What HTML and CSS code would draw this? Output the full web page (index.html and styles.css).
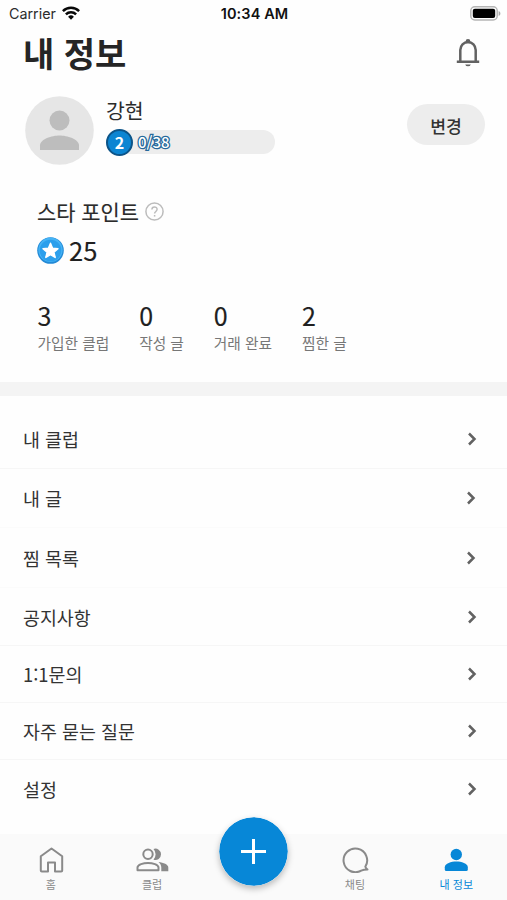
FILE: index.html
```html
<!DOCTYPE html>
<html lang="ko">
<head>
<meta charset="utf-8">
<meta name="viewport" content="width=device-width, initial-scale=1">
<title>내 정보</title>
<link rel="stylesheet" href="styles.css">
</head>
<body>
<div class="app">
  <header class="status">
    <div class="carrier"><span>Carrier</span>
      <svg class="wifi" width="18" height="14" viewBox="0 0 18 14"><g fill="none" stroke="#080808" stroke-width="2.5"><path d="M.9 5.1a11.6 11.6 0 0 1 16.2 0"/><path d="M3.9 8.4a7.2 7.2 0 0 1 10.2 0"/></g><path d="M9 13.7 6.1 10.7a4.2 4.2 0 0 1 5.8 0z" fill="#080808"/></svg>
    </div>
    <div class="time">10:34 AM</div>
    <svg class="battery" width="31" height="15" viewBox="0 0 31 15"><rect x=".8" y=".8" width="26.4" height="13.2" rx="4" fill="#fff" stroke="#b5b5b5" stroke-width="1.5"/><rect x="2.8" y="2.8" width="22.4" height="9.2" rx="2" fill="#000"/><path d="M28.6 5v5c1.2-.4 1.8-1.4 1.8-2.5S29.800 5.400 28.600 5z" fill="#aaa"/></svg>
  </header>

  <div class="titlebar">
    <h1>내 정보</h1>
    <svg width="24" height="30" viewBox="0 0 24 30"><path d="M4.300 23.500V12a7.700 8 0 0 1 15.400 0v11.500" fill="none" stroke="#626262" stroke-width="2.500"/><path d="M.8 22.500h22.400v2.500H.8zM9.600 3.500a2.400 2.400 0 0 1 4.800 0v1.700H9.600zM9.200 26.400h5.600a2.900 2.500 0 0 1-5.600 0z" fill="#626262"/></svg>
  </div>

  <section class="profile">
    <svg class="avatar" width="69" height="69" viewBox="0 0 69 69"><circle cx="34.500" cy="34.500" r="34.300" fill="#e6e6e6"/><circle cx="34.500" cy="24.500" r="10" fill="#bdbdbd"/><path d="M15 54v-4.500c0-6.500 12-10 19.500-10s19.500 3.500 19.500 10V54z" fill="#bdbdbd"/></svg>
    <div class="who">
      <div class="name">강현</div>
      <div class="level"><span class="badge">2</span><span class="progress">0/38</span></div>
    </div>
    <button class="change">변경</button>
  </section>

  <section class="points">
    <div class="points-title"><span>스타 포인트</span>
      <svg width="19" height="19" viewBox="0 0 19 19" fill="none" stroke="#bcbcbc" stroke-width="1.500"><circle cx="9.500" cy="9.500" r="8.600"/><path d="M6.900 7.500c0-3.500 5.200-3.400 5.200-.2 0 2.100-2.500 2.200-2.500 4.300"/><path d="M9.600 13v1.600"/></svg>
    </div>
    <div class="points-value">
      <svg width="27" height="27" viewBox="0 0 27 27"><circle cx="13.500" cy="13.500" r="13.300" fill="#238ad6"/><circle cx="13.500" cy="12.800" r="12.200" fill="#45b3f5"/><circle cx="13.500" cy="13.500" r="10.800" fill="#2b9fec"/><path d="M13.500 6.200l2.100 5 5.400.5-4.100 3.500 1.300 5.300-4.700-2.900-4.700 2.900 1.300-5.300L6 11.700l5.400-.5z" fill="#fff" stroke="#fff" stroke-width="1.400" stroke-linejoin="round"/></svg>
      <span>25</span>
    </div>
  </section>

  <section class="stats">
    <div><b>3</b><span>가입한 클럽</span></div>
    <div><b>0</b><span>작성 글</span></div>
    <div><b>0</b><span>거래 완료</span></div>
    <div><b>2</b><span>찜한 글</span></div>
  </section>

  <nav class="menu">
    <a class="first"><span>내 클럽</span><svg class="chev" viewBox="0 0 10 14"><path d="M2 1.500 7.500 7 2 12.500"/></svg></a>
    <a class="faint inset"><span>내 글</span><svg class="chev" viewBox="0 0 10 14"><path d="M2 1.500 7.500 7 2 12.500"/></svg></a>
    <a class="faint inset tall"><span>찜 목록</span><svg class="chev" viewBox="0 0 10 14"><path d="M2 1.500 7.500 7 2 12.500"/></svg></a>
    <a class="mid"><span>공지사항</span><svg class="chev" viewBox="0 0 10 14"><path d="M2 1.500 7.500 7 2 12.500"/></svg></a>
    <a><span>1:1문의</span><svg class="chev" viewBox="0 0 10 14"><path d="M2 1.500 7.500 7 2 12.500"/></svg></a>
    <a><span>자주 묻는 질문</span><svg class="chev" viewBox="0 0 10 14"><path d="M2 1.500 7.500 7 2 12.500"/></svg></a>
    <a class="last"><span>설정</span><svg class="chev" viewBox="0 0 10 14"><path d="M2 1.500 7.500 7 2 12.500"/></svg></a>
  </nav>

  <footer class="tabs">
    <a><svg width="34" height="28" viewBox="0 0 34 28" fill="none" stroke="#8a8a8a" stroke-width="2" stroke-linejoin="round"><path d="M6.800 11.300 17.500 3.500l10.700 7.800V25.500a1 1 0 0 1-1 1H21V17.500h-7v9H7.800a1 1 0 0 1-1-1z"/></svg><span>홈</span></a>
    <a><svg width="34" height="28" viewBox="0 0 34 28"><g fill="none" stroke="#8a8a8a" stroke-width="2"><circle cx="13" cy="9.300" r="4.700"/><path d="M2.500 25.200v-2.600c0-3 6-4.600 10.500-4.600s10.500 1.600 10.500 4.600v2.600z" stroke-linejoin="round"/></g><path d="M18.500 3.900a5.700 5.700 0 1 1 0 10.800 8 8 0 0 0 0-10.800zM23.500 17.100c5 .6 9.800 2.500 9.800 5.400v3.700h-7v-3.600c0-2.300-1-4-2.800-5.500z" fill="#8a8a8a"/></svg><span>클럽</span></a>
    <a class="add" aria-label="+"><svg width="69" height="69" viewBox="0 0 69 69"><circle cx="34.500" cy="34.500" r="34.300" fill="#0787d7"/><path d="M34.500 22v25M22 34.500h25" stroke="#fff" stroke-width="3"/></svg></a>
    <a><svg width="34" height="28" viewBox="0 0 34 28" fill="none" stroke="#8a8a8a" stroke-width="2" stroke-linejoin="round"><path d="M27.300 21.700A11.800 11.800 0 1 0 23.200 25.600c2.300-.9 4.300-1 6.300-1-1.200-.9-2-1.700-2.200-2.900z"/></svg><span>채팅</span></a>
    <a class="active"><svg width="34" height="28" viewBox="0 0 34 28" fill="#0787d7"><circle cx="17.300" cy="9.500" r="5.700"/><path d="M5.800 24.500v-2.300c0-3.700 6.500-5.600 11.500-5.600s11.500 1.900 11.500 5.600v2.300q0 1.500-1.500 1.500H7.300q-1.500 0-1.500-1.500z"/></svg><span>내 정보</span></a>
  </footer>
</div>
</body>
</html>
```
FILE: styles.css
```css
* { box-sizing: border-box; }
body {
  margin: 0;
  background: #fefefe;
  color: #2b2b2b;
  font-family: "Noto Sans CJK KR", sans-serif;
}
svg { display: block; flex: none; }
.app { height: 900px; overflow: hidden; display: flex; flex-direction: column; }

.status {
  height: 28px;
  flex: none;
  display: grid;
  grid-template-columns: 1fr auto 1fr;
  align-items: center;
  padding: 0 6px 0 9px;
  font: 15px/28px Inter, sans-serif;
  color: #2c2c2c;
}
.carrier { display: flex; align-items: center; gap: 7px; font-size: 14.300px; }
.wifi { margin: -2px 0 0 -1px; }
.time { font-weight: 600; font-size: 14.500px; color: #111; margin-left: -1px; letter-spacing: .1px; }
.battery { justify-self: end; margin-top: -1px; }

.titlebar {
  height: 52px;
  flex: none;
  display: flex;
  justify-content: space-between;
  align-items: center;
  padding: 0 27px 2px 23px;
}
h1 { margin: 0; font-size: 34px; line-height: 50px; font-weight: 700; color: #252525; }

.profile { height: 85px; flex: none; display: flex; align-items: flex-start; padding: 16px 22px 0 25px; }
.who { margin-left: 12px; }
.name { font-size: 20.500px; line-height: 28px; }
.level {
  margin-top: 6px;
  width: 169px;
  height: 24px;
  display: flex;
  align-items: center;
  background: #ededed;
  border-radius: 13px;
}
.badge {
  width: 27px;
  height: 27px;
  border-radius: 50%;
  border: 2px solid #0c5488;
  background: #0c85d2;
  color: #fff;
  font: 700 16px/23px "Noto Sans CJK KR", sans-serif;
  text-align: center;
}
.progress {
  margin-left: 5px;
  font: 500 15px/24px "Noto Sans CJK KR", sans-serif;
  color: #fff;
  -webkit-text-stroke: 2.600px #26699b;
  paint-order: stroke fill;
}
.change {
  margin: 8px 0 0 auto;
  width: 78px;
  height: 41px;
  border: 0;
  border-radius: 21px;
  background: #ededed;
  color: #333;
  font: 500 17.200px/41px "Noto Sans CJK KR", sans-serif;
  padding: 1px 0 0;
}

.points { height: 131px; flex: none; padding: 30px 37px 0; }
.points-title {
  display: flex;
  align-items: center;
  gap: 6px;
  height: 32px;
  font-size: 20.900px;
}
.points-title span { -webkit-text-stroke: .15px #2b2b2b; }
.points-value {
  display: flex;
  align-items: center;
  gap: 5px;
  height: 34px;
  margin-top: 6px;
  font-size: 25.500px;
  line-height: 34px;
  color: #202020;
  -webkit-text-stroke: .15px #202020;
}

.stats {
  height: 100px;
  flex: none;
  display: flex;
  gap: 30px;
  padding: 3px 37.500px 0;
  border-bottom: 14px solid #f4f4f4;
}
.stats div { display: flex; flex-direction: column; }
.stats b { font-size: 25px; line-height: 32px; font-weight: 400; color: #202020; -webkit-text-stroke: .15px #202020; }
.stats span { font-size: 14.700px; line-height: 24px; color: #777; }

.menu { height: 438px; flex: none; padding-top: 14px; }
.menu a {
  height: 57px;
  display: flex;
  align-items: center;
  justify-content: space-between;
  padding: 0 30.500px 0 23px;
  border-bottom: 1px solid #f6f6f6;
  font-size: 18.400px;
  line-height: 28px;
  color: #333;
}
.menu a.first, .menu a.faint { height: 59px; }
.menu a.tall { height: 60px; }
.menu a.mid { height: 58px; }
.menu a.faint { border-color: #fbfbfb; }
.menu a.inset { padding-right: 31.500px; }
.menu a.last { border: 0; }
.chev { width: 10px; height: 14px; fill: none; stroke: #626262; stroke-width: 2.500; }

.tabs {
  height: 66px;
  flex: none;
  display: grid;
  grid-template-columns: repeat(5, 1fr);
  background: #fafafa;
}
.tabs a {
  display: flex;
  flex-direction: column;
  align-items: center;
  padding-top: 11px;
  font-size: 11px;
  line-height: 18px;
  color: #8a8a8a;
}
.tabs span { margin-top: 2px; }
.tabs .add { padding: 0; margin: -17px -1px 0 0; }
.add svg { border-radius: 50%; box-shadow: 0 3px 6px rgba(0, 0, 0, .25); }
.tabs .active { color: #0787d7; }
```
